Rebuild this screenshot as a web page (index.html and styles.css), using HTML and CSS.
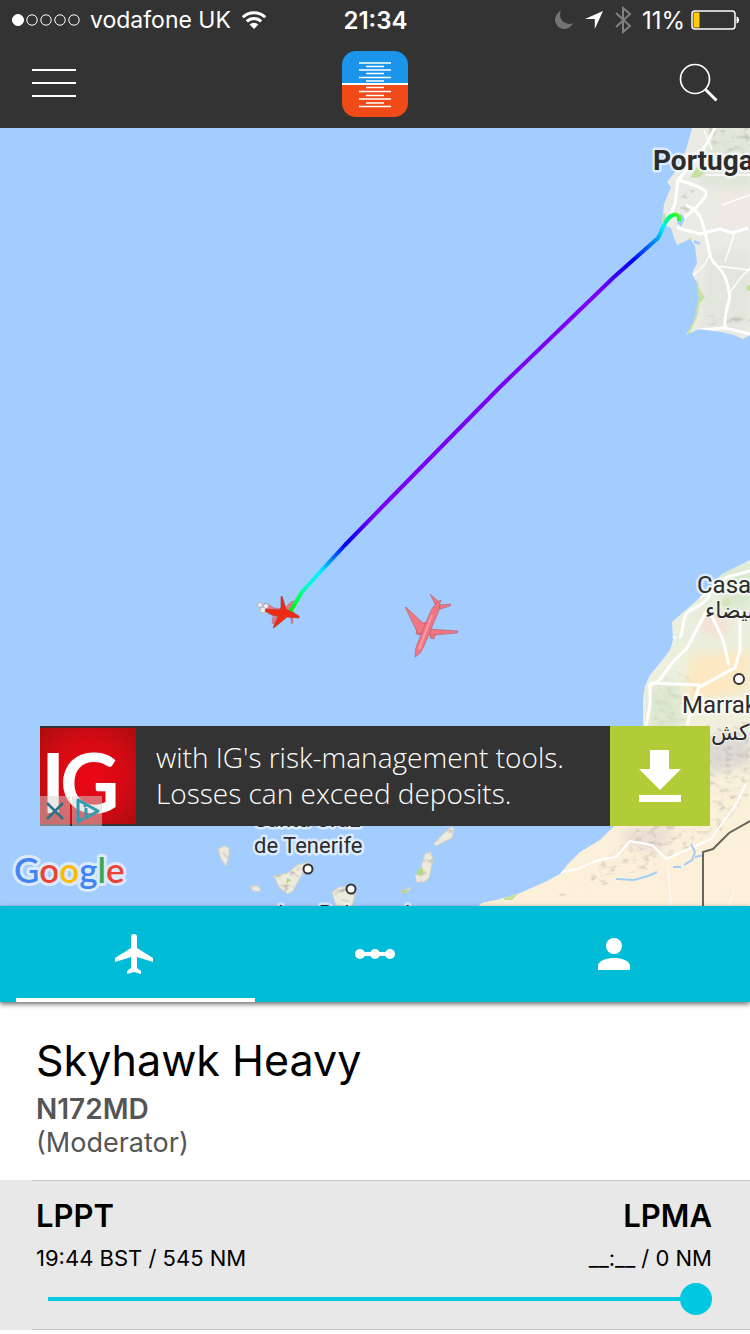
FILE: index.html
```html
<!DOCTYPE html>
<html lang="en">
<head>
<meta charset="utf-8">
<meta name="viewport" content="width=device-width, initial-scale=1">
<title>Skyhawk Heavy</title>
<link rel="stylesheet" href="styles.css">
</head>
<body>
<header class="top">
  <div class="status">
    <div class="status-side">
      <svg class="signal" width="68" height="14" viewBox="0 0 68 14"><g fill="none" stroke="#fff"><circle cx="6" cy="7" r="5.5" fill="#fff"/><circle cx="20" cy="7" r="5.2"/><circle cx="34" cy="7" r="5.2"/><circle cx="48" cy="7" r="5.2"/><circle cx="62" cy="7" r="5.2"/></g></svg>
      <span class="carrier">vodafone UK</span>
      <svg class="wifi" width="26" height="20" viewBox="0 0 26 20"><g fill="none" stroke="#fff" stroke-width="3"><path d="M1.8 7.2a16 16 0 0 1 22.4 0"/><path d="M5.8 11.4a10.3 10.3 0 0 1 14.4 0"/></g><path d="M13 19l-4.4-4.4a6.4 6.4 0 0 1 8.8 0z" fill="#fff"/></svg>
    </div>
    <strong class="clock">21:34</strong>
    <div class="status-side status-end">
      <svg width="20" height="20" viewBox="0 0 20 20"><path d="M7 1a9.3 9.3 0 1 0 12 12A9 9 0 0 1 7 1z" fill="#737373"/></svg>
      <svg width="20" height="20" viewBox="0 0 20 20"><path d="M19 1L1 9h9.800V19z" fill="#fff"/></svg>
      <svg width="18" height="28" viewBox="0 0 18 28"><path d="M2 7l14 13-7 6V2l7 6L2 21" fill="none" stroke="#808080" stroke-width="2"/></svg>
      <span>11%</span>
      <svg class="battery" width="48" height="20" viewBox="0 0 48 20"><rect x="1" y="1" width="43" height="18" rx="3" fill="none" stroke="#fff" stroke-width="1.500"/><path d="M2.500 3.500q0-1 1-1H8.500v15H3.500q-1 0-1-1z" fill="#ffcc00"/><path d="M45.500 6.500q2.500 .5 2.500 3.500t-2.500 3.500z" fill="#fff"/></svg>
    </div>
  </div>
  <div class="toolbar">
    <button class="tool" type="button" aria-label="Menu"><svg width="44" height="30" viewBox="0 0 44 30"><path d="M0 1h44M0 14h44M0 27h44" stroke="#fff" stroke-width="2"/></svg></button>
    <svg class="logo" width="66" height="66" viewBox="0 0 66 66" role="img" aria-label="Attitude indicator">
      <clipPath id="badge"><rect width="66" height="66" rx="14"/></clipPath>
      <g clip-path="url(#badge)"><path fill="#1b95e9" d="M0 0h66v33H0z"/><path fill="#ef4a18" d="M0 33h66v33H0z"/><path d="M0 33h66" stroke="#fff" stroke-width="2"/></g>
      <path d="M17 12h32M17 19h32M17 26.500h32M17 40.500h32M17 48h32M17 55.500h32M24 15.500h18M24 22.500h18M24 30h18M24 36.500h18M24 44.500h18M24 52h18" stroke="#fff" stroke-width="1.400"/>
    </svg>
    <button class="tool" type="button" aria-label="Search"><svg width="40" height="44" viewBox="0 0 40 44"><circle cx="17" cy="17" r="14.500" fill="none" stroke="#fff" stroke-width="1.700"/><path d="M27 27l11.500 11.500" stroke="#fff" stroke-width="3"/></svg></button>
  </div>
</header>

<section class="map" aria-label="Flight map">
  <svg class="map-canvas" viewBox="0 128 750 778" preserveAspectRatio="xMidYMid slice">
    <defs>
      <linearGradient id="track" gradientUnits="userSpaceOnUse" x1="290" y1="612" x2="680" y2="215">
        <stop offset="0" stop-color="#00f000"/><stop offset=".03" stop-color="#00ff58"/><stop offset=".055" stop-color="#00ffd0"/><stop offset=".09" stop-color="#00f0ff"/><stop offset=".12" stop-color="#0080ff"/><stop offset=".155" stop-color="#0000f5"/><stop offset=".23" stop-color="#7800f8"/><stop offset=".8" stop-color="#7c00f8"/><stop offset=".88" stop-color="#0000f8"/><stop offset=".93" stop-color="#0080f8"/><stop offset=".965" stop-color="#00f0f0"/><stop offset=".99" stop-color="#00ff50"/><stop offset="1" stop-color="#70f000"/>
      </linearGradient>
      <linearGradient id="desert" x1="0" y1="0" x2="0" y2="1">
        <stop offset="0" stop-color="#e6eee0"/><stop offset=".42" stop-color="#eff0dd"/><stop offset=".7" stop-color="#fbf0da"/><stop offset="1" stop-color="#fdf0da"/>
      </linearGradient>
      <filter id="relief" x="0" y="0" width="1" height="1">
        <feTurbulence type="fractalNoise" baseFrequency=".12 .17" numOctaves="4" seed="8" result="noise"/>
        <feColorMatrix in="noise" values="0 0 0 0 .45  0 0 0 0 .42  0 0 0 0 .36  2.600 0 0 0 -1.350"/>
        <feComposite in2="SourceAlpha" operator="in"/>
      </filter>
      <filter id="soft"><feGaussianBlur stdDeviation="5"/></filter>
      <path id="iberia" d="M692 128L686 150 675 172 667 182l4 5-7 17-2 20 9 4 3 10 3 7 13-6 5 7 2 17-5 11 5 9 2 15-5 23-8 14 13-6 22 3 13 3 9 4 7-4V128z"/>
      <path id="africa" d="M750 560l-10 5-18 9-17 18-10 10-23 20 1 18-3 10-10 13-10 12-5 11-2 14v30c-6 40-20 81-29 96l-14 14-20 12-12 12-8 10-15 8-25 11-20 6-18 4-5 4h273z"/>
      <clipPath id="inland"><use href="#iberia"/><use href="#africa"/></clipPath>
      <g id="islands"><path d="M218 849l6-3 5 2v8l-3 10-5-7z"/><path d="M251 886l6-1 4 5-3 2-6-2z"/><path d="M274 876l14-3 9-8 12-3-7 12-9 17-6 3-8-7z"/><path d="M332 892l7-5h12l4 7-3 12h-16z"/><path d="M434 844l8-9 9-8 3 1-2 10-9 4-7 4z"/><path d="M425 854l6-2 2 8-4 18-5 4h-7l-2-6 6-8z"/><path d="M400 892l11-5-4 6z"/></g>
    </defs>
    <rect y="100" width="750" height="840" fill="#a4cdff"/>
    <use href="#iberia" fill="#ebebe5"/>
    <use href="#africa" fill="url(#desert)"/>
    <g clip-path="url(#inland)">
      <g filter="url(#soft)">
        <path d="M710 128h40v60h-50z" fill="#e0e6d8"/><path d="M705 250h45v80h-48z" fill="#e3e6dc"/><path d="M720 190h30v40h-35z" fill="#efe8e3"/>
        <path d="M690 655l60-5v40l-65 15z" fill="#fce8c2"/><path d="M700 610l30 10-5 20-25-8z" fill="#f4e2d6"/><path d="M648 690l30-10 5 50h-35z" fill="#dce8d0"/><path d="M720 570l30-4v40l-25 5z" fill="#d8e8cc"/>
        <path d="M700 738l50-4v30l-40 10z" fill="#ddd9d4"/><path d="M620 830l55-6-15 30-35-10z" fill="#eadfd4"/>
      </g>
      <path d="M705 128h45v30h-30zM680 190h14l-6 26h-8zM703 316l47-4v10l-45 3z" filter="url(#relief)" opacity=".7"/>
      <path d="M655 680l20-10 22 12-10 50h-34z" filter="url(#relief)" opacity=".35"/>
      <path d="M708 722h42v70l-30 40-45 22-40 22-80 22 40-30 40-36z" filter="url(#relief)" opacity=".6"/>
      <g fill="#c6e0a0"><path d="M690 178l7-11 8 5-5 5zM661 222l3-10 4 10zM682 244l9-7 1 5-6 3zM697 278l3 12 5 8-5 5-3 14-8 18-2 1 8-26zM504 897l8-5h8l-8 8h-8z"/><circle cx="749" cy="288" r="3"/><circle cx="726" cy="602" r="4" opacity=".5"/></g>
      <g fill="none" stroke="#fff" stroke-linejoin="round">
        <g stroke-width="3"><path d="M716 125c-10 25-25 40-38 55l-3 24-8 20M678 180c14 4 26 8 28 12s-11 18-20 24l-8 12 22 6 20-5 12 4 16-5M686 205c12 5 16 12 19 28 5 14 2 24 12 33s10 18 13 30c-2 10-6 18-5 32M698 330l27-2 25 6"/><path d="M700 597l27-20 23-6M710 592c-2 12-16 15-22 20s-4 18-8 26M648 686l10-4 15-20 14-14 20-38M710 610c4 15 12 22 15 38l4 18M740 610v40l-5 18-36 19-12 38M650 683l50 2M650 685v20l-4 22M700 687l32-18"/></g>
        <path d="M706 175h44M717 266l33 4M730 292c8-10 14-20 20-23M693 276l12-12 6-12M660 638l-10 2M676 638l-14-4M722 205l28-10M735 232l-10 30M712 150l-8-20" stroke-width="1.500"/>
        <path d="M550 874l28-5c15-7 20-10 38-12l14-16 22 4 14 14 45-20 25-35 10-20" stroke-width="2"/><path d="M668 866l3 40M735 890l-8 20" stroke-width="1.500" opacity=".6"/>
      </g>
      <path d="M681 213l4 6-4 8-4-4zM694 240l6 2v3l-6-2zM702 299l3 3" fill="#a4cdff"/>
      <path d="M616 879l18 1 14-4 9-4M673 867l8 0M684 865l8-5 3-8-4-8m4 13l9-2" fill="none" stroke="#a4cdf6" stroke-width="2"/>
      <path d="M703 906v-54l10-3 16-16 21-12" fill="none" stroke="#67655c" stroke-width="2"/>
    </g>

    <use href="#islands" fill="#edeade" stroke="#d5d3c5"/>
    <use href="#islands" filter="url(#relief)"/>
    <path d="M287 878l4 2-5 4zM417 871l6-4v7l-5 1zM402 891l7-2-3 4z" fill="#b5d982"/>
    <g fill="#fff" stroke="#333" stroke-width="2"><circle cx="739" cy="679" r="5"/><circle cx="308" cy="869" r="4.500"/><circle cx="351" cy="889" r="4.500"/></g>

    <g class="labels">
      <text class="country" x="653" y="170">Portugal</text>
      <text class="city" x="697" y="593">Casablanca</text>
      <text class="arabic" x="705" y="618">البيضاء</text>
      <text class="city" x="682" y="713">Marrakesh</text>
      <text class="arabic" x="711" y="740">مراكش</text>
      <text class="town" x="254" y="827">Santa Cruz</text>
      <text class="town" x="254" y="853">de Tenerife</text>
      <text class="town" x="278" y="921">Las Palmas de</text>
    </g>

    <g fill="#ee7784" stroke="#b0566a" stroke-width=".5">
      <path d="M264 604l2-1 8 5 10 1 7-7 3-1-5 9 5 2 1 5-3-2-7-2-8 2-3 9-2-1 2-12-7-2z"/><path d="M290 615l2 9 1-2-1-7z"/>
    </g>
    <g fill="#f1eeee" stroke="#999" stroke-width=".6"><circle cx="260" cy="605" r="2.500"/><circle cx="263" cy="610" r="3"/><circle cx="266" cy="606" r="2.500"/><circle cx="270" cy="612" r="2.500"/></g>
    <path d="M290 612l12-20 20-22 23-25 40-41 115-117 114-110 44-39c5-9 6-17 13-22 5-3 9-1 8 5" fill="none" stroke="url(#track)" stroke-width="4" stroke-linejoin="round"/>
    <path d="M279 617l-1 4 5-2z" fill="#ffd000"/>
    <path d="M265 611l1-2 14 1 1-3 0-10 1-1 4 13 13 7 0 2-12-1-12 10-2 1 5-12-6-1z" fill="#ee2a12" stroke="#a3352d" stroke-width=".6"/>
    <g fill="#f17683" stroke="#a9505e" stroke-width=".5" stroke-linejoin="round">
      <path d="M417 628l-1 6 4 1 2-6zM431 633l-1 5 4 1 2-6z"/>
      <path d="M405 607l2 1 16 15 7-2-1 8 29 2-1 2-23 2h-12l-5-3-9-19z"/>
      <path d="M430 594l8 7 1 4 12-1-1 2-13 4-2-6z"/>
      <path d="M415 657c0-6 1-11 3-15l11-27c2-6 6-11 10-14l2-1-1 3c0 8-5 16-8 24l-8 19c-2 5-5 9-9 11z"/>
    </g>
    <path d="M419 649l13-34" stroke="#ff9ca6" stroke-width="2"/>
    <text class="google" x="14" y="883"><tspan fill="#4285f4">G</tspan><tspan fill="#ea4335">o</tspan><tspan fill="#fbbc05">o</tspan><tspan fill="#4285f4">g</tspan><tspan fill="#34a853">l</tspan><tspan fill="#ea4335">e</tspan></text>
  </svg>
  <aside class="ad">
    <div class="ad-brand">
      <svg width="96" height="100" viewBox="0 0 96 100" role="img" aria-label="IG">
        <defs><radialGradient id="red" r=".75"><stop offset="0" stop-color="#ec0815"/><stop offset=".5" stop-color="#d60a14"/><stop offset="1" stop-color="#a50d0c"/></radialGradient></defs>
        <rect y="2" width="96" height="96" fill="url(#red)"/>
        <text class="ig" x="1" y="87">I<tspan x="20">G</tspan></text>
      </svg>
      <div class="ad-controls">
        <button type="button" aria-label="Close ad"><svg width="30" height="30" viewBox="0 0 30 30"><path d="M7 7l16 16M23 7L7 23" stroke="#28768b" stroke-width="2.500"/></svg></button>
        <button type="button" aria-label="Ad choices"><svg width="30" height="30" viewBox="0 0 30 30"><path d="M11 22l-5 4V4l20 11-12 7v-10" fill="none" stroke="#2e9db0" stroke-width="3" stroke-linejoin="round"/><circle cx="13" cy="10" r="1.500" fill="#2e9db0"/></svg></button>
      </div>
    </div>
    <p class="ad-text">with IG's risk-management tools. Losses can exceed deposits.</p>
    <button class="ad-get" type="button" aria-label="Download"><svg width="44" height="54" viewBox="0 0 44 54"><path d="M12 1h19v19h12L22 41 1 20h11zM1 46h42v7H1z" fill="#fff"/></svg></button>
  </aside>
</section>

<nav class="tabs" aria-label="Flight details">
  <button class="tab tab-active" type="button" aria-label="Aircraft"><svg width="48" height="48" viewBox="0 0 24 24"><path d="M20.500 16v-2l-8-5V3.500a1.500 1.500 0 0 0-3 0V9l-8 5v2l8-2.500V19L7.500 20.500V22l3.500-1 3.500 1v-1.500L12.500 19v-5.500z" fill="#fff"/></svg></button>
  <button class="tab" type="button" aria-label="Route"><svg width="48" height="48" viewBox="0 0 48 48"><path d="M8 24h32" stroke="#fff" stroke-width="4"/><g fill="#fff"><circle cx="9" cy="24" r="5"/><circle cx="24" cy="24" r="5"/><circle cx="39" cy="24" r="5"/></g></svg></button>
  <button class="tab" type="button" aria-label="Pilot"><svg width="48" height="48" viewBox="0 0 48 48"><circle cx="24" cy="16" r="8" fill="#fff"/><path d="M8 40v-4c0-5.500 9-8 16-8s16 2.500 16 8v4z" fill="#fff"/></svg></button>
</nav>

<main class="details">
  <section class="aircraft">
    <h1>Skyhawk Heavy</h1>
    <p class="registration">N172MD</p>
    <p class="role">(Moderator)</p>
  </section>
  <section class="route">
    <div class="ends">
      <div><h2>LPPT</h2><p>19:44 BST / 545 NM</p></div>
      <div class="arrival"><h2>LPMA</h2><p>__:__ / 0 NM</p></div>
    </div>
    <input class="progress" type="range" min="0" max="100" value="100" aria-label="Flight progress">
  </section>
</main>
</body>
</html>
```
FILE: styles.css
```css
* { box-sizing: border-box; }
body {
  margin: 0;
  min-height: 100vh;
  display: flex;
  flex-direction: column;
  background: #fff;
  color: #000;
  font-family: Inter, "Liberation Sans", sans-serif;
}
button { padding: 0; border: 0; background: none; cursor: pointer; }
svg { display: block; }
h1, h2, p { margin: 0; }

.top { background: #333; color: #fff; }
.status {
  height: 40px;
  padding: 0 11px 0 12px;
  display: grid;
  grid-template-columns: 1fr auto 1fr;
  align-items: center;
  font-size: 24px;
}
.status-side { display: flex; align-items: center; gap: 10px; white-space: nowrap; }
.status-end { justify-content: flex-end; }
.carrier { font-size: 23px; }
.clock { font-weight: 600; }
.battery { margin-left: -4px; }
.toolbar {
  height: 88px;
  padding: 0 32px;
  display: grid;
  grid-template-columns: 1fr auto 1fr;
  align-items: center;
}
.tool { justify-self: start; }
.tool:last-child { justify-self: end; }

.map { position: relative; flex: 1 0 640px; overflow: hidden; background: #a4cdff; }
.map-canvas { position: absolute; inset: 0; width: 100%; height: 100%; }
.labels {
  font-family: Roboto, "DejaVu Sans", sans-serif;
  fill: #2c2c2c;
  stroke: #fff;
  stroke-opacity: .6;
  stroke-width: 5px;
  stroke-linejoin: round;
  paint-order: stroke;
}
.country { font-size: 28px; font-weight: 700; }
.city { font-size: 24px; }
.town { font-size: 22px; }
.arabic { font-family: "DejaVu Sans", sans-serif; font-size: 22px; stroke-width: 2px; }
.google {
  font-family: Lato, sans-serif;
  font-size: 35px;
  font-weight: 600;
  stroke: #dce9fb;
  stroke-width: 6px;
  stroke-linejoin: round;
  paint-order: stroke;
}

.ad {
  position: absolute;
  left: 40px;
  right: 40px;
  bottom: 80px;
  display: flex;
  min-height: 100px;
  background: #333;
}
.ad-brand { position: relative; flex: none; }
.ig { font: 700 82px Lato, sans-serif; fill: #fff; }
.ad-controls { position: absolute; left: 0; bottom: 0; display: flex; gap: 2px; }
.ad-controls button { background: rgba(215, 210, 210, .5); }
.ad-text {
  flex: 1;
  align-self: center;
  padding: 0 20px 2px;
  color: #fff;
  font: 300 28px/36px "Open Sans", sans-serif;
}
.ad-get { flex: none; width: 100px; display: grid; place-items: center; background: #b2cc38; }

.tabs {
  position: relative;
  display: flex;
  height: 96px;
  padding: 0 16px;
  background: #00bcd7;
  box-shadow: 0 2px 5px rgba(0, 0, 0, .6);
}
.tab { flex: 1; display: grid; place-items: center; border: solid transparent; border-width: 4px 0; }
.tab-active { border-bottom-color: #fff; }

.details { padding-bottom: 4px; }
.aircraft { padding: 30px 36px 20px; }
.aircraft h1 { font-size: 43px; line-height: 56px; font-weight: 400; }
.registration, .role { line-height: 34px; color: #555; }
.registration { padding-top: 4px; font-size: 28px; font-weight: 600; }
.role { font-size: 27px; }
.route {
  height: 150px;
  padding: 16px 38px 0 36px;
  background: linear-gradient(#c8c8c8, #c8c8c8) 32px 0 / 100% 1px no-repeat, linear-gradient(#c8c8c8, #c8c8c8) 32px 100% / 100% 1px no-repeat, #e8e8e8;
}
.ends { display: flex; justify-content: space-between; }
.ends h2 { font-size: 31px; line-height: 40px; font-weight: 600; }
.ends p { font-size: 22px; line-height: 44px; }
.arrival { text-align: right; }
.progress {
  appearance: none;
  display: block;
  width: calc(100% - 12px);
  height: 32px;
  margin: 3px 0 0 12px;
  background: linear-gradient(#00c8df, #00c8df) center / 100% 4px no-repeat;
}
.progress::-webkit-slider-thumb {
  appearance: none;
  width: 32px;
  height: 32px;
  border-radius: 50%;
  background: #00c8df;
}
```
